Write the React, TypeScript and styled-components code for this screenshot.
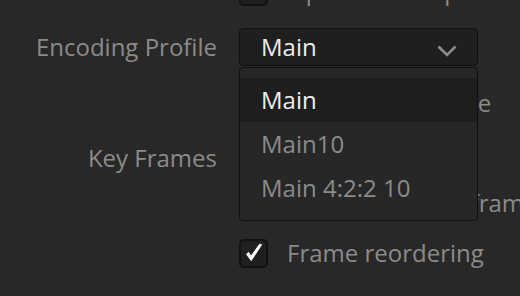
import React from 'react';
import styled, { createGlobalStyle } from 'styled-components';

const GlobalStyle = createGlobalStyle`
  html, body {
    margin: 0;
    padding: 0;
    background: #282828;
    overflow: hidden;
  }
  body {
    font-family: "Open Sans", "Noto Sans", sans-serif;
    font-size: 24px;
    -webkit-font-smoothing: antialiased;
  }
`

const profiles = ['Main', 'Main10', 'Main 4:2:2 10']

export default function App() {
  const selected = 'Main'

  return (
    <>
      <GlobalStyle />
      <Form>

        <Row height={56}>
          <Label />
          <Control>
            <Checkbox />
            <CheckText>Optimize for speed</CheckText>
          </Control>
        </Row>

        <Row height={56}>
          <Label>Encoding Profile</Label>
          <Control>
            <SelectWrap>
              <SelectBox>
                <span>{selected}</span>
                <Chevron width="20" height="12" viewBox="0 0 20 12">
                  <polyline points="1.5,1.5 10,10 18.5,1.5" fill="none" stroke="#8d8d8d" strokeWidth="2.6" />
                </Chevron>
              </SelectBox>

              <Menu>
                {profiles.map(p => (
                  <MenuItem key={p} active={p === selected}>{p}</MenuItem>
                ))}
              </Menu>
            </SelectWrap>
          </Control>
        </Row>

        <Row height={55}>
          <Label />
          <Control>
            <Checkbox />
            <CheckText>Multi-pass encode</CheckText>
          </Control>
        </Row>

        <Row height={56}>
          <Label>Key Frames</Label>
          <Control>
            <Checkbox checked />
            <CheckText>Automatic</CheckText>
          </Control>
        </Row>

        <Row height={34}>
          <Label />
          <Control>
            <CheckText>Every</CheckText>
            <NumberField>1</NumberField>
            <CheckText>frames</CheckText>
          </Control>
        </Row>

        <Row height={66}>
          <Label />
          <Control>
            <Checkbox checked />
            <CheckText>Frame reordering</CheckText>
          </Control>
        </Row>

      </Form>
    </>
  );
}

type CheckboxProps = { checked?: boolean }
function Checkbox(props: CheckboxProps) {
  return (
    <Box>
      {props.checked ? (
        <svg width="20" height="20" viewBox="0 0 20 20">
          <path d="M2.5 11.2 L7.2 17.5 L17.6 1.8 L15.6 1.2 L7.1 13.2 L4.6 9.4 Z" fill="#ffffff" stroke="#ffffff" strokeWidth="1" strokeLinejoin="round" />
        </svg>
      ) : (null)}
    </Box>
  )
}

const Form = styled.div`
  display: flex;
  flex-direction: column;
  margin-top: -37px;
  width: 520px;
`

const Row = styled.div<{ height: number }>`
  display: grid;
  grid-template-columns: 217px 1fr;
  column-gap: 22px;
  align-items: center;
  height: ${p => p.height}px;
`

const Label = styled.div`
  text-align: right;
  color: #8b8b8b;
  white-space: nowrap;
  line-height: 1;
`

const Control = styled.div`
  display: flex;
  flex-direction: row;
  align-items: center;
  white-space: nowrap;
  min-width: 0;
`

const Box = styled.div`
  box-sizing: border-box;
  width: 29px;
  height: 29px;
  border: 2px solid #111111;
  border-radius: 5px;
  background: #1f1f1f;
  display: flex;
  align-items: center;
  justify-content: center;
  flex-shrink: 0;
`

const CheckText = styled.span`
  color: #8b8b8b;
  margin-left: 19px;
  line-height: 1;

  &:first-child {
    margin-left: 0;
  }
`

const NumberField = styled.div`
  box-sizing: border-box;
  width: 140px;
  height: 34px;
  margin-left: 12px;
  border: 1px solid #111;
  border-radius: 4px;
  background: #1f1f1f;
  color: #ddd;
  padding-left: 10px;
  line-height: 32px;
  flex-shrink: 0;
`

const SelectWrap = styled.div`
  position: relative;
  width: 239px;
`

const SelectBox = styled.div`
  box-sizing: border-box;
  height: 38px;
  border: 1.5px solid #101010;
  border-radius: 4px;
  background: #1f1f1f;
  color: #ececec;
  display: flex;
  flex-direction: row;
  align-items: center;
  justify-content: space-between;
  padding: 0 20px 0 21px;
  line-height: 1;
`

const Chevron = styled.svg`
  margin-top: 8px;
`

const Menu = styled.div`
  position: absolute;
  top: calc(100% + 1px);
  left: 0;
  right: 0;
  box-sizing: border-box;
  height: 154px;
  padding: 10px 0;
  border: 1.5px solid #101010;
  border-radius: 4px;
  background: #272727;
  display: flex;
  flex-direction: column;
  z-index: 10;
`

const MenuItem = styled.div<{ active: boolean }>`
  height: 44px;
  display: flex;
  align-items: center;
  padding-left: 21px;
  line-height: 1;
  color: ${p => p.active ? '#ededed' : '#8b8b8b'};
  background: ${p => p.active ? '#1e1e1e' : 'transparent'};
`
